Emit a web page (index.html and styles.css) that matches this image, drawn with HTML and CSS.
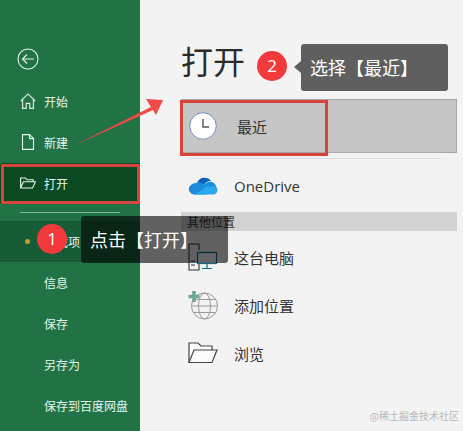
FILE: index.html
```html
<!DOCTYPE html>
<html lang="zh-CN">
<head>
    <meta charset="UTF-8">
    <title>打开</title>
    <link rel="stylesheet" href="styles.css">
</head>
<body>
    <div class="page">
        <aside class="sidebar">
            <div class="back">
                <svg width="22" height="22" viewBox="0 0 22 22" fill="none" stroke="#e6f4ea" stroke-width="1.1">
                    <circle cx="11" cy="11" r="10"/>
                    <path d="M17 11H5.5M10 6.5 5.5 11l4.5 4.5"/>
                </svg>
            </div>
            <div class="nav-item">
                <svg class="nav-icon" width="16" height="16" viewBox="0 0 16 16" fill="none" stroke="#e6f4ea" stroke-width="1.1">
                    <path d="M.8 8 8 .9 15.2 8M2.6 6.4v9h3.6v-5h3.6v5h3.6v-9"/>
                </svg>
                <span>开始</span>
            </div>
            <div class="nav-item">
                <svg class="nav-icon" width="16" height="16" viewBox="0 0 16 16" fill="none" stroke="#e6f4ea" stroke-width="1.1">
                    <path d="M2.5.6h7l4 4v10.8h-11zM9.5.6v4h4"/>
                </svg>
                <span>新建</span>
            </div>
            <div class="nav-item nav-open">
                <svg class="nav-icon" width="16" height="16" viewBox="0 0 16 16" fill="none" stroke="#e6f4ea" stroke-width="1.1">
                    <path d="M.6 13V3h5l1.3 1.8h6.3v2M.6 13 3.4 6.8h12L12.6 13z"/>
                </svg>
                <span>打开</span>
            </div>
            <div class="nav-rule"></div>
            <div class="nav-item nav-addin">
                <i class="dot"></i>
                <span>加载项</span>
            </div>
            <div class="nav-item"><span>信息</span></div>
            <div class="nav-item"><span>保存</span></div>
            <div class="nav-item"><span>另存为</span></div>
            <div class="nav-item"><span>保存到百度网盘</span></div>
        </aside>

        <main class="main">
            <h1 class="title">打开</h1>
            <div class="row row-recent">
                <svg class="row-icon" width="28" height="28" viewBox="0 0 28 28">
                    <circle cx="14" cy="14" r="13.3" fill="#fff" stroke="#6f8fc0" stroke-width="1"/>
                    <path d="M14 7v8h6" fill="none" stroke="#555" stroke-width="1.4"/>
                </svg>
                <span>最近</span>
            </div>
            <div class="row-rule"></div>
            <div class="row row-drive">
                <svg class="row-icon" width="30" height="20" viewBox="0 0 30 20">
                    <path d="M9 7a8 8 0 0 1 14-2c-4 0-6 2-7 4z" fill="#0c64b8"/>
                    <path d="M11 6.500c3 0 5 1 6 3l7 3-6 6H6C1 18-1 12 3 9c2-2 5-2 8-2.500z" fill="#1b8ad8"/>
                    <path d="M16 9c2-3 6-4 8-3 3 1 4 3 4 5-3 0-8 1-11-1z" fill="#1490df"/>
                    <path d="M6 18.500h19c4 0 6-5 3-8H18l-6 5z" fill="#2aa8ea"/>
                </svg>
                <span class="latin">OneDrive</span>
            </div>
            <div class="group">其他位置</div>
            <div class="row row-pc">
                <svg class="row-icon" width="30" height="28" viewBox="0 0 30 28" fill="none">
                    <path d="M1 1h10v6M1 1v26h10V21" stroke="#333" stroke-width="1.1"/>
                    <path d="M3 18h4M3 22h4" stroke="#333" stroke-width="1"/>
                    <rect x="9.500" y="9.500" width="19" height="11" fill="#f4fbfd" stroke="#0f6a8c" stroke-width="1.2"/>
                    <path d="M19 21v4M14 25.500h10" stroke="#0f6a8c" stroke-width="1.2"/>
                </svg>
                <span>这台电脑</span>
            </div>
            <div class="row row-add">
                <svg class="row-icon" width="30" height="30" viewBox="0 0 30 30" fill="none" stroke="#9a9a9a" stroke-width="1">
                    <circle cx="16.500" cy="16" r="13"/>
                    <ellipse cx="16.500" cy="16" rx="6" ry="13"/>
                    <path d="M3.500 16h26M5.500 9.500h22M5.500 22.500h22"/>
                    <path d="M6 1v11M.5 6.500h11" stroke="#6fa596" stroke-width="3.600"/>
                </svg>
                <span>添加位置</span>
            </div>
            <div class="row row-browse">
                <svg class="row-icon" width="30" height="22" viewBox="0 0 30 22" fill="#fbfbfb" stroke="#444" stroke-width="1.200">
                    <path d="M1 20.500V1h9l3 3h11v4"/>
                    <path d="M1 20.500 6 8h23l-5 12.500z"/>
                </svg>
                <span>浏览</span>
            </div>
        </main>

        <svg class="arrow" width="100" height="60" viewBox="0 0 100 60">
            <path d="M0 54 78 15 73 7 90 8 83 23 80 18z" fill="#ef4a45"/>
        </svg>

        <div class="mark mark-open"></div>
        <div class="mark mark-recent"></div>

        <div class="tip tip-one">点击【打开】</div>
        <div class="badge badge-one">1</div>

        <div class="tip tip-two">选择【最近】</div>
        <div class="badge badge-two">2</div>

        <div class="watermark">@稀土掘金技术社区</div>
    </div>
</body>
</html>
```

FILE: styles.css
```css
* {
    box-sizing: border-box;
}
body {
    margin: 0;
    font-family: "Noto Sans CJK SC", "Noto Sans", sans-serif;
}
.page {
    position: relative;
    display: flex;
    width: 463px;
    height: 431px;
    overflow: hidden;
    background: #f3f3f3;
}
.sidebar {
    width: 140px;
    padding-top: 48px;
    background: #217346;
    color: #e6f4ea;
    font-size: 12px;
}
.back {
    height: 33px;
    padding-left: 17px;
}
.nav-item {
    display: flex;
    align-items: center;
    height: 41px;
    padding-left: 44px;
    position: relative;
}
.nav-icon {
    position: absolute;
    left: 20px;
    top: 12px;
}
.nav-open {
    margin-top: 0;
    background: #0b4a22;
}
.nav-rule {
    height: 1px;
    margin: 8px 20px 8px;
    background: #7fb595;
}
.nav-addin {
    background: #185c37;
}
.dot {
    position: absolute;
    left: 25px;
    top: 18px;
    width: 5px;
    height: 5px;
    border-radius: 50%;
    background: #c99a2e;
}
.main {
    flex: 1;
    padding: 33px 6px 0 41px;
    color: #333;
    font-size: 15px;
}
.title {
    margin: 0 0 12px;
    height: 54px;
    line-height: 54px;
    font-size: 32px;
    font-weight: 400;
    color: #2b2b2b;
}
.row {
    position: relative;
    display: flex;
    align-items: center;
    height: 48px;
    padding-left: 53px;
}
.row-icon {
    position: absolute;
    left: 7px;
    top: 50%;
    transform: translateY(-50%);
}
.row-recent {
    height: 54px;
    padding-left: 55px;
    background: #c6c6c6;
    border: 1px solid #a8a8a8;
}
.row-rule {
    height: 1px;
    margin: 5px 16px 0 8px;
    background: #dcdcdc;
}
.row-drive {
    height: 53px;
}
.latin {
    font-family: "Open Sans", sans-serif;
}
.group {
    height: 19px;
    padding-left: 6px;
    margin-bottom: 2px;
    background: #d2d2d2;
    font-size: 12px;
    line-height: 19px;
}
.row-pc {
    margin-top: 2px;
}
.mark {
    position: absolute;
    border: 3px solid #d8433d;
}
.mark-open {
    left: 1px;
    top: 164px;
    width: 139px;
    height: 40px;
}
.mark-recent {
    left: 180px;
    top: 100px;
    width: 148px;
    height: 56px;
}
.arrow {
    position: absolute;
    left: 73px;
    top: 92px;
}
.tip {
    position: absolute;
    width: 147px;
    height: 47px;
    border-radius: 3px;
    padding-left: 9px;
    background: rgba(0, 0, 0, 0.6);
    color: #fff;
    font-size: 18px;
    line-height: 47px;
}
.tip-one {
    left: 81px;
    top: 216px;
}
.tip-two {
    left: 301px;
    top: 44px;
    background: #5f5f5f;
}
.tip-two::before {
    content: "";
    position: absolute;
    left: -7px;
    top: 17px;
    border-style: solid;
    border-width: 6px 7px 6px 0;
    border-color: transparent #5f5f5f transparent transparent;
}
.badge {
    position: absolute;
    width: 30px;
    height: 30px;
    border-radius: 50%;
    background: #f23a3c;
    color: #fff;
    font-family: "Open Sans", sans-serif;
    font-size: 17px;
    line-height: 30px;
    text-align: center;
}
.badge-one {
    left: 37px;
    top: 224px;
}
.badge-two {
    left: 257px;
    top: 51px;
}
.watermark {
    position: absolute;
    right: 4px;
    bottom: 8px;
    color: #b9b9b9;
    font-size: 10px;
    line-height: 14px;
}
```
